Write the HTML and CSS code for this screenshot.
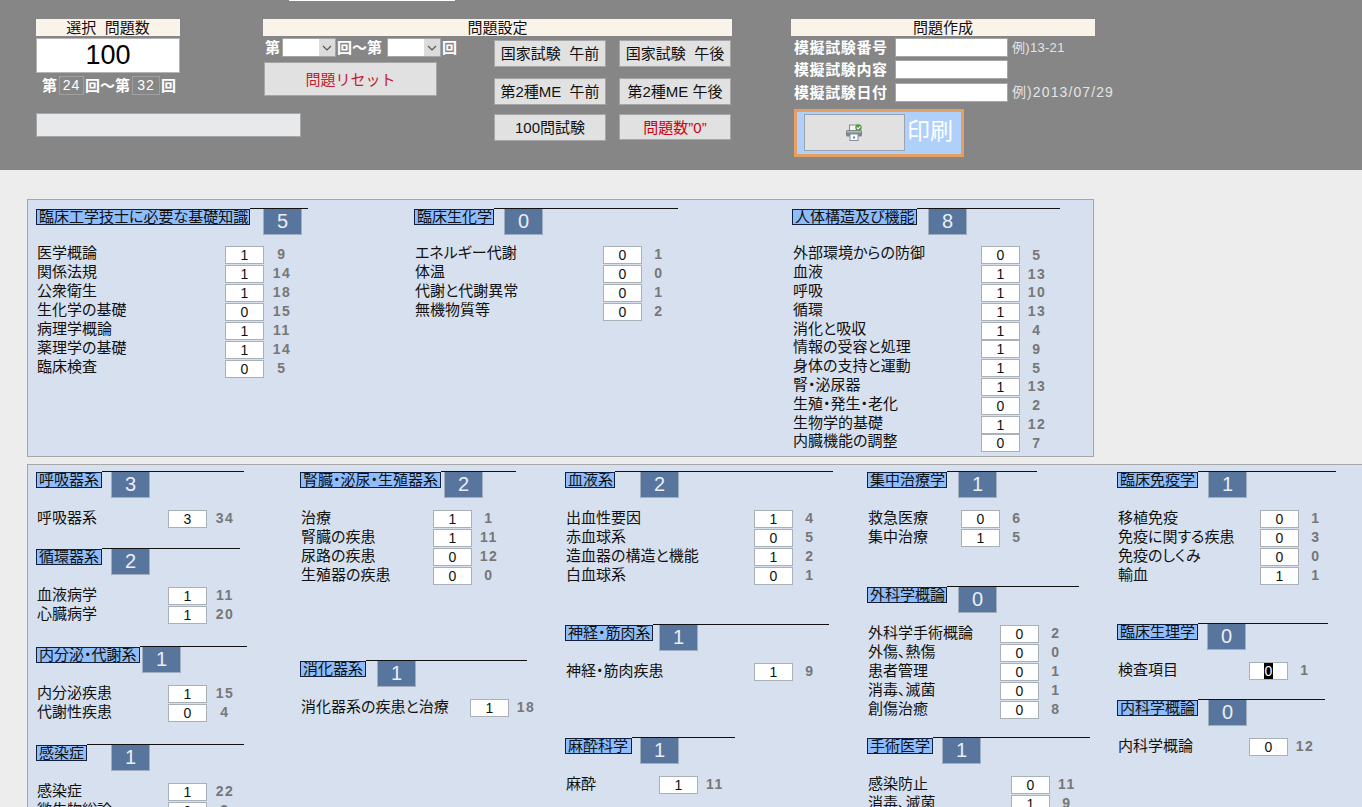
FILE: index.html
```html
<!DOCTYPE html>
<html lang="ja">
<head>
  <meta charset="UTF-8"/>
  <title>問題作成</title>
  <link rel="stylesheet" href="styles.css">
</head>
<body>
  <div class="tab"></div>
  <div class="header">
    <div class="group1">
      <div class="title">選択&nbsp; 問題数</div>
      <div class="total">100</div>
      <div class="range">
        <b>第</b><span class="rangeBox">24</span><b>回～第</b><span class="rangeBox wide">32</span><b>回</b>
      </div>
      <div class="bar"></div>
    </div>

    <div class="group2">
      <div class="title">問題設定</div>
      <div class="group2Body">
        <div class="group2Left">
          <div class="pick">
            <b>第</b>
            <div class="combo"><div class="comboText"></div><div class="comboArrow"><svg width="10" height="6" viewBox="0 0 10 6"><path d="M1 1l4 4 4-4" fill="none" stroke="#555" stroke-width="1.2"/></svg></div></div>
            <b>回～第</b>
            <div class="combo combo2"><div class="comboText"></div><div class="comboArrow"><svg width="10" height="6" viewBox="0 0 10 6"><path d="M1 1l4 4 4-4" fill="none" stroke="#555" stroke-width="1.2"/></svg></div></div>
            <b>回</b>
          </div>
          <div class="btn reset">問題リセット</div>
        </div>
        <div class="btnGrid">
          <div class="btn">国家試験&nbsp; 午前</div>
          <div class="btn">国家試験&nbsp; 午後</div>
          <div class="btn">第2種ME&nbsp; 午前</div>
          <div class="btn">第2種ME 午後</div>
          <div class="btn">100問試験</div>
          <div class="btn red">問題数”0”</div>
        </div>
      </div>
    </div>

    <div class="group3">
      <div class="title">問題作成</div>
      <div class="mock"><b>模擬試験番号</b><div class="field"></div><span class="note">例)13-21</span></div>
      <div class="mock mock2"><b>模擬試験内容</b><div class="field"></div></div>
      <div class="mock mock3"><b>模擬試験日付</b><div class="field"></div><span class="note noteWide">例)2013/07/29</span></div>
      <div class="print">
        <div class="printBtn">
          <svg width="19" height="17" viewBox="0 0 19 17">
            <rect x="4.5" y="1" width="8" height="6" fill="#f4f4f4" stroke="#8a8a8a"/>
            <rect x="1" y="6" width="16" height="6.5" rx="1.5" fill="#7d858c"/>
            <rect x="2" y="7" width="14" height="1.5" fill="#b5bbc0"/>
            <rect x="5" y="10" width="8" height="6.5" fill="#fbfbfb" stroke="#8a8fa0"/>
            <rect x="8" y="12.5" width="2" height="2" fill="#5a86c0"/>
            <circle cx="13.5" cy="3.5" r="3.2" fill="#4f9a3c"/>
            <path d="M11.8 3.5l1.3 1.4 2.3-2.6" fill="none" stroke="#fff" stroke-width="1.1"/>
          </svg>
        </div>
        <span class="printText">印刷</span>
      </div>
    </div>
  </div>

  <div class="panel panel1">
    <div class="col col378">
      <div class="sec kiso">
        <div class="head"><span class="secTitle">臨床工学技士に必要な基礎知識</span><div class="rule"><span class="badge">5</span></div></div>
        <div class="row"><span class="label">医学概論</span><span class="num">1</span><span class="count">9</span></div>
        <div class="row"><span class="label">関係法規</span><span class="num">1</span><span class="count">14</span></div>
        <div class="row"><span class="label">公衆衛生</span><span class="num">1</span><span class="count">18</span></div>
        <div class="row"><span class="label">生化学の基礎</span><span class="num">0</span><span class="count">15</span></div>
        <div class="row"><span class="label">病理学概論</span><span class="num">1</span><span class="count">11</span></div>
        <div class="row"><span class="label">薬理学の基礎</span><span class="num">1</span><span class="count">14</span></div>
        <div class="row"><span class="label">臨床検査</span><span class="num">0</span><span class="count">5</span></div>
      </div>
    </div>
    <div class="col col378">
      <div class="sec seika">
        <div class="head"><span class="secTitle">臨床生化学</span><div class="rule"><span class="badge">0</span></div></div>
        <div class="row"><span class="label">エネルギー代謝</span><span class="num">0</span><span class="count">1</span></div>
        <div class="row"><span class="label">体温</span><span class="num">0</span><span class="count">0</span></div>
        <div class="row"><span class="label">代謝と代謝異常</span><span class="num">0</span><span class="count">1</span></div>
        <div class="row"><span class="label">無機物質等</span><span class="num">0</span><span class="count">2</span></div>
      </div>
    </div>
    <div class="col">
      <div class="sec jintai">
        <div class="head"><span class="secTitle">人体構造及び機能</span><div class="rule"><span class="badge">8</span></div></div>
        <div class="row"><span class="label">外部環境からの防御</span><span class="num">0</span><span class="count">5</span></div>
        <div class="row"><span class="label">血液</span><span class="num">1</span><span class="count">13</span></div>
        <div class="row"><span class="label">呼吸</span><span class="num">1</span><span class="count">10</span></div>
        <div class="row"><span class="label">循環</span><span class="num">1</span><span class="count">13</span></div>
        <div class="row"><span class="label">消化と吸収</span><span class="num">1</span><span class="count">4</span></div>
        <div class="row"><span class="label">情報の受容と処理</span><span class="num">1</span><span class="count">9</span></div>
        <div class="row"><span class="label">身体の支持と運動</span><span class="num">1</span><span class="count">5</span></div>
        <div class="row"><span class="label">腎・泌尿器</span><span class="num">1</span><span class="count">13</span></div>
        <div class="row"><span class="label">生殖・発生・老化</span><span class="num">0</span><span class="count">2</span></div>
        <div class="row"><span class="label">生物学的基礎</span><span class="num">1</span><span class="count">12</span></div>
        <div class="row"><span class="label">内臓機能の調整</span><span class="num">0</span><span class="count">7</span></div>
      </div>
    </div>
  </div>

  <div class="panel panel2">
    <div class="col colA">
      <div class="sec kokyu">
        <div class="head"><span class="secTitle">呼吸器系</span><div class="rule"><span class="badge">3</span></div></div>
        <div class="row"><span class="label">呼吸器系</span><span class="num">3</span><span class="count">34</span></div>
      </div>
      <div class="sec junkan">
        <div class="head"><span class="secTitle">循環器系</span><div class="rule"><span class="badge">2</span></div></div>
        <div class="row"><span class="label">血液病学</span><span class="num">1</span><span class="count">11</span></div>
        <div class="row"><span class="label">心臓病学</span><span class="num">1</span><span class="count">20</span></div>
      </div>
      <div class="sec naibun">
        <div class="head"><span class="secTitle">内分泌・代謝系</span><div class="rule"><span class="badge">1</span></div></div>
        <div class="row"><span class="label">内分泌疾患</span><span class="num">1</span><span class="count">15</span></div>
        <div class="row"><span class="label">代謝性疾患</span><span class="num">0</span><span class="count">4</span></div>
      </div>
      <div class="sec kansen">
        <div class="head"><span class="secTitle">感染症</span><div class="rule"><span class="badge">1</span></div></div>
        <div class="row"><span class="label">感染症</span><span class="num">1</span><span class="count">22</span></div>
        <div class="row"><span class="label">微生物総論</span><span class="num">0</span><span class="count">3</span></div>
      </div>
    </div>
    <div class="col colB">
      <div class="sec jinzo">
        <div class="head"><span class="secTitle">腎臓・泌尿・生殖器系</span><div class="rule"><span class="badge">2</span></div></div>
        <div class="row"><span class="label">治療</span><span class="num">1</span><span class="count">1</span></div>
        <div class="row"><span class="label">腎臓の疾患</span><span class="num">1</span><span class="count">11</span></div>
        <div class="row"><span class="label">尿路の疾患</span><span class="num">0</span><span class="count">12</span></div>
        <div class="row"><span class="label">生殖器の疾患</span><span class="num">0</span><span class="count">0</span></div>
      </div>
      <div class="sec shoka">
        <div class="head"><span class="secTitle">消化器系</span><div class="rule"><span class="badge">1</span></div></div>
        <div class="row"><span class="label">消化器系の疾患と治療</span><span class="num">1</span><span class="count">18</span></div>
      </div>
    </div>
    <div class="col colC">
      <div class="sec ketsueki">
        <div class="head"><span class="secTitle">血液系</span><div class="rule"><span class="badge">2</span></div></div>
        <div class="row"><span class="label">出血性要因</span><span class="num">1</span><span class="count">4</span></div>
        <div class="row"><span class="label">赤血球系</span><span class="num">0</span><span class="count">5</span></div>
        <div class="row"><span class="label">造血器の構造と機能</span><span class="num">1</span><span class="count">2</span></div>
        <div class="row"><span class="label">白血球系</span><span class="num">0</span><span class="count">1</span></div>
      </div>
      <div class="sec shinkei">
        <div class="head"><span class="secTitle">神経・筋肉系</span><div class="rule"><span class="badge">1</span></div></div>
        <div class="row"><span class="label">神経・筋肉疾患</span><span class="num">1</span><span class="count">9</span></div>
      </div>
      <div class="sec masui">
        <div class="head"><span class="secTitle">麻酔科学</span><div class="rule"><span class="badge">1</span></div></div>
        <div class="row"><span class="label">麻酔</span><span class="num">1</span><span class="count">11</span></div>
      </div>
    </div>
    <div class="col colD">
      <div class="sec shuchu">
        <div class="head"><span class="secTitle">集中治療学</span><div class="rule"><span class="badge">1</span></div></div>
        <div class="row"><span class="label">救急医療</span><span class="num">0</span><span class="count">6</span></div>
        <div class="row"><span class="label">集中治療</span><span class="num">1</span><span class="count">5</span></div>
      </div>
      <div class="sec geka">
        <div class="head"><span class="secTitle">外科学概論</span><div class="rule"><span class="badge">0</span></div></div>
        <div class="row"><span class="label">外科学手術概論</span><span class="num">0</span><span class="count">2</span></div>
        <div class="row"><span class="label">外傷、熱傷</span><span class="num">0</span><span class="count">0</span></div>
        <div class="row"><span class="label">患者管理</span><span class="num">0</span><span class="count">1</span></div>
        <div class="row"><span class="label">消毒、滅菌</span><span class="num">0</span><span class="count">1</span></div>
        <div class="row"><span class="label">創傷治癒</span><span class="num">0</span><span class="count">8</span></div>
      </div>
      <div class="sec shujutsu">
        <div class="head"><span class="secTitle">手術医学</span><div class="rule"><span class="badge">1</span></div></div>
        <div class="row"><span class="label">感染防止</span><span class="num">0</span><span class="count">11</span></div>
        <div class="row"><span class="label">消毒、滅菌</span><span class="num">1</span><span class="count">9</span></div>
      </div>
    </div>
    <div class="col">
      <div class="sec meneki">
        <div class="head"><span class="secTitle">臨床免疫学</span><div class="rule"><span class="badge">1</span></div></div>
        <div class="row"><span class="label">移植免疫</span><span class="num">0</span><span class="count">1</span></div>
        <div class="row"><span class="label">免疫に関する疾患</span><span class="num">0</span><span class="count">3</span></div>
        <div class="row"><span class="label">免疫のしくみ</span><span class="num">0</span><span class="count">0</span></div>
        <div class="row"><span class="label">輸血</span><span class="num">1</span><span class="count">1</span></div>
      </div>
      <div class="sec seiri">
        <div class="head"><span class="secTitle">臨床生理学</span><div class="rule"><span class="badge">0</span></div></div>
        <div class="row"><span class="label">検査項目</span><span class="num"><span class="selected">0</span></span><span class="count">1</span></div>
      </div>
      <div class="sec naika">
        <div class="head"><span class="secTitle">内科学概論</span><div class="rule"><span class="badge">0</span></div></div>
        <div class="row"><span class="label">内科学概論</span><span class="num">0</span><span class="count">12</span></div>
      </div>
    </div>
  </div>
</body>
</html>
```

FILE: styles.css
```css
html, body {
    margin: 0;
    height: 807px;
    overflow: hidden;
}
body {
    background: #ededed;
    color: #111;
    font-family: "Liberation Sans", "Noto Sans CJK JP", sans-serif;
    font-size: 15px;
    line-height: 17px;
}
.tab {
    position: absolute;
    left: 289px;
    top: 0;
    width: 166px;
    height: 1px;
    background: white;
}

/* top grey area */
.header {
    display: flex;
    box-sizing: border-box;
    height: 170px;
    padding: 19px 0 0 36px;
    background: #868686;
}
.title {
    height: 17px;
    background: #faf3e9;
    text-align: center;
    font-size: 15px;
}
.header b {
    color: white;
    font-size: 15px;
    font-weight: bold;
    white-space: nowrap;
}
.group1 { width: 227px; }
.group1 .title { width: 144px; }
.total {
    box-sizing: border-box;
    width: 144px;
    height: 35px;
    margin-top: 2px;
    border: 1px solid #b4b4b4;
    background: white;
    color: black;
    font-size: 27px;
    line-height: 32px;
    text-align: center;
}
.range {
    display: flex;
    align-items: center;
    width: 144px;
    height: 19px;
    margin-top: 3px;
    padding-left: 6px;
}
.rangeBox {
    box-sizing: border-box;
    width: 25px;
    height: 19px;
    margin: 0 1px 0 2px;
    border: 1px solid #a0a0a0;
    color: white;
    font-size: 14px;
    letter-spacing: 1px;
    text-align: center;
}
.rangeBox.wide { width: 28px; }
.bar {
    box-sizing: border-box;
    width: 265px;
    height: 24px;
    margin-top: 18px;
    border: 1px solid #a6a6a6;
    background: #e8e9eb;
}

.group2 { width: 469px; }
.group2Body { display: flex; }
.group2Left { width: 231px; padding-left: 1px; box-sizing: border-box; }
.pick {
    display: flex;
    align-items: center;
    height: 19px;
    margin-top: 2px;
    padding-left: 1px;
}
.combo {
    display: flex;
    box-sizing: border-box;
    width: 54px;
    height: 19px;
    margin: 0 1px 0 2px;
    border: 1px solid #a6a6a6;
}
.combo2 { margin-left: 5px; }
.comboText { flex: 1; background: white; }
.comboArrow {
    display: flex;
    align-items: center;
    justify-content: center;
    width: 16px;
    background: #dcdcdc;
}
.btn {
    display: flex;
    align-items: center;
    justify-content: center;
    box-sizing: border-box;
    height: 27px;
    border: 1px solid #a6a6a6;
    background: #e1e1e1;
    font-size: 15px;
    white-space: nowrap;
}
.reset {
    width: 173px;
    height: 34px;
    margin-top: 5px;
    color: #c4202c;
}
.red { color: #d00010; height: 26px; }
.btnGrid {
    display: grid;
    grid-template-columns: 112px 112px;
    grid-template-rows: 38px 36px 27px;
    column-gap: 13px;
    margin-top: 4px;
}

.group3 { width: 304px; margin-left: 59px; }
.mock {
    display: flex;
    align-items: center;
    height: 19px;
    margin-top: 2px;
    padding-left: 3px;
}
.mock2 { margin-top: 3px; }
.mock3 { margin-top: 4px; }
.mock b { flex: none; width: 101px; letter-spacing: 0.6px; }
.field {
    box-sizing: border-box;
    flex: none;
    width: 113px;
    height: 19px;
    border: 1px solid #a6a6a6;
    background: white;
}
.note {
    margin-left: 4px;
    color: #e4e4e4;
    font-size: 13px;
    letter-spacing: 0.3px;
    white-space: nowrap;
}
.noteWide { font-size: 14px; letter-spacing: 1.1px; }
.print {
    display: flex;
    box-sizing: border-box;
    width: 170px;
    height: 48px;
    margin: 7px 0 0 3px;
    padding: 2px 0 0 7px;
    border: 3px solid #e59f61;
    background: #aed0fb;
}
.printBtn {
    display: flex;
    align-items: center;
    justify-content: center;
    box-sizing: border-box;
    width: 101px;
    height: 37px;
    border: 1px solid #9aa4b0;
    background: #e1e1e1;
}
.printText {
    margin-left: 2px;
    color: white;
    font-size: 23px;
    line-height: 34px;
    white-space: nowrap;
}

/* blue panels */
.panel {
    display: flex;
    box-sizing: border-box;
    margin-left: 27px;
    padding-left: 8px;
    border: 1px solid #a6a6a6;
    background: #d6e0ee;
    font-feature-settings: "palt";
}
.panel1 {
    width: 1067px;
    height: 258px;
    margin-top: 29px;
    padding-top: 9px;
}
.panel2 {
    width: 1340px;
    height: 400px;
    margin-top: 7px;
    padding-top: 7px;
}
.col { flex: none; }
.col378 { width: 378px; }
.colA { width: 264px; }
.colB { width: 265px; }
.colC { width: 302px; }
.colD { width: 250px; }

.sec { width: var(--w); }
.head { display: flex; height: 27px; margin-bottom: 10px; }
.panel1 .head { margin-bottom: 9px; }
.panel1 .jintai .head { margin-bottom: 10px; }
.secTitle {
    flex: none;
    box-sizing: border-box;
    width: var(--t);
    height: 16px;
    border: 1px solid #10203c;
    background: #8fbdfb;
    font-size: 15px;
    line-height: 14px;
    padding-left: 2px;
    white-space: nowrap;
    overflow: hidden;
}
.rule {
    flex: 1;
    height: 26px;
    margin-top: -1px;
    border-top: 1px solid #111;
}
.badge {
    display: block;
    box-sizing: border-box;
    width: 39px;
    height: 26px;
    margin-left: var(--b);
    border: 1px solid #a0aec0;
    border-top: 0;
    background: #58759d;
    color: #e8eef6;
    font-size: 20px;
    line-height: 25px;
    text-align: center;
}
.row {
    display: flex;
    align-items: center;
    height: 19px;
}
.jintai .row { height: 18.8px; }
.label {
    flex: none;
    width: var(--l);
    margin-top: -3px;
    padding-left: 1px;
    box-sizing: border-box;
    white-space: nowrap;
}
.panel1 .label { margin-top: -5px; }
.num {
    flex: none;
    box-sizing: border-box;
    width: 39px;
    height: 18px;
    border: 1px solid #a8b0b8;
    background: white;
    color: #111;
    font-size: 14px;
    line-height: 16px;
    text-align: center;
}
.selected { background: black; color: white; padding: 0 1px; }
.count {
    flex: none;
    width: var(--c, 34px);
    color: #777;
    font-size: 14px;
    font-weight: bold;
    letter-spacing: 1.5px;
    text-align: center;
}

/* panel 1 */
.kiso { --t: 214px; --w: 272px; --b: 13px; --l: 189px; --c: 36px; }
.seika { --t: 80px; --w: 264px; --b: 10px; --l: 189px; }
.jintai { --t: 125px; --w: 268px; --b: 11px; --l: 189px; }

/* panel 2 */
.kokyu { --t: 66px; --w: 208px; --b: 9px; --l: 132px; --c: 36px; }
.junkan { --t: 66px; --w: 204px; --b: 9px; --l: 132px; --c: 36px; margin-top: 21px; }
.naibun { --t: 104px; --w: 211px; --b: 2px; --l: 132px; --c: 36px; margin-top: 23px; }
.kansen { --t: 51px; --w: 208px; --b: 24px; --l: 132px; --c: 36px; margin-top: 23px; }
.jinzo { --t: 141px; --w: 216px; --b: 3px; --l: 133px; }
.shoka { --t: 66px; --w: 227px; --b: 11px; --l: 170px; margin-top: 76px; }
.ketsueki { --t: 50px; --w: 268px; --b: 25px; --l: 189px; }
.shinkei { --t: 88px; --w: 264px; --b: 6px; --l: 189px; margin-top: 40px; }
.masui { --t: 67px; --w: 170px; --b: 8px; --l: 94px; margin-top: 57px; }
.shuchu { --t: 80px; --w: 170px; --b: 11px; --l: 94px; }
.geka { --t: 80px; --w: 212px; --b: 11px; --l: 133px; margin-top: 40px; }
.shujutsu { --t: 66px; --w: 223px; --b: 9px; --l: 144px; margin-top: 19px; }
.meneki { --t: 81px; --w: 219px; --b: 10px; --l: 143px; }
.seiri { --t: 81px; --w: 211px; --b: 9px; --l: 132px; margin-top: 39px; }
.naika { --t: 81px; --w: 208px; --b: 10px; --l: 132px; margin-top: 20px; }
```
